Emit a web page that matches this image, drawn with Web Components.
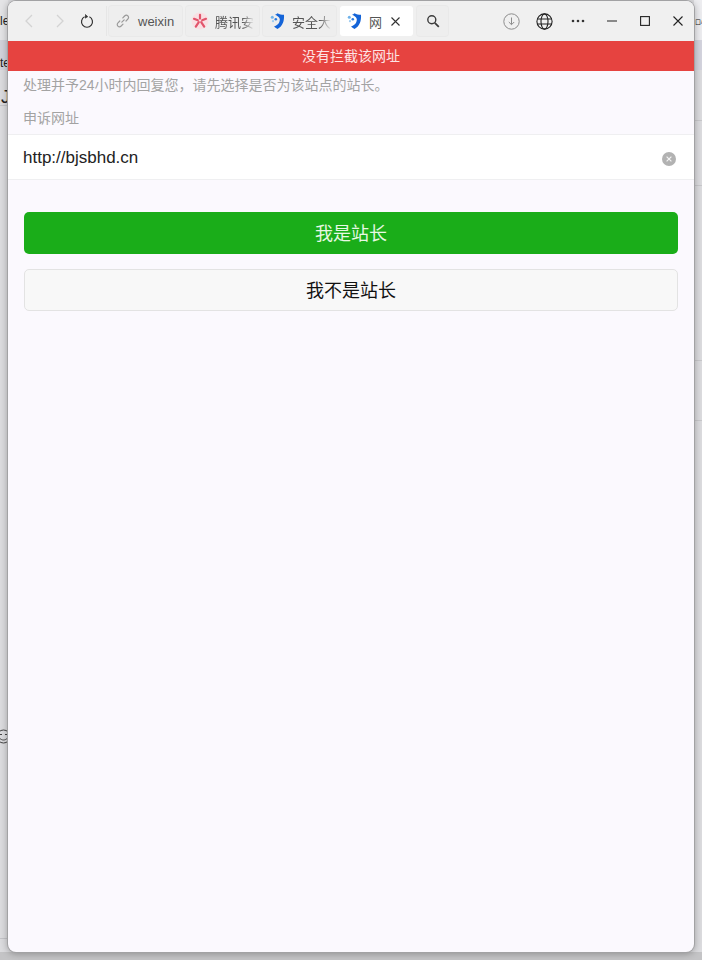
<!DOCTYPE html>
<html lang="zh">
<head>
<meta charset="utf-8">
<title>网址申诉</title>
<style>
html, body { margin: 0; height: 100%; }
body { width: 702px; height: 960px; overflow: hidden; position: relative; background: #dcdcdf; font-family: "Liberation Sans", "Noto Sans CJK SC", sans-serif; }
</style>
</head>
<body>
<desk-backdrop></desk-backdrop>
<browser-window>
	<nav-bar slot="bar">
		<browser-tab slot="tabs" icon="link">weixin</browser-tab>
		<browser-tab slot="tabs" icon="star" fade>腾讯安</browser-tab>
		<browser-tab slot="tabs" icon="shield" fade>安全大</browser-tab>
		<browser-tab slot="tabs" icon="shield" active>网</browser-tab>
	</nav-bar>
	<alert-banner slot="bar">没有拦截该网址</alert-banner>
	<appeal-form>
		<span slot="hint">处理并予24小时内回复您，请先选择是否为该站点的站长。</span>
		<span slot="label">申诉网址</span>
		<span slot="url">http://bjsbhd.cn</span>
		<action-button slot="actions" kind="primary">我是站长</action-button>
		<action-button slot="actions">我不是站长</action-button>
	</appeal-form>
</browser-window>

<script>
var sans = '"Liberation Sans", "Noto Sans CJK SC", sans-serif'
var tabIcons = {
	link: `<svg width="16" height="16" viewBox="0 0 16 16" fill="none" stroke="#9a9a9a" stroke-width="1.200" stroke-linecap="round"><path d="M6.800 9.200 9.200 6.800"/><path d="M7.800 4.800 9.600 3c1-1 2.400-1 3.300-.1s.9 2.300-.1 3.300L11 8"/><path d="M8 11.200 6.200 13c-1 1-2.400 1-3.300.1S2 10.800 3 9.800L4.800 8"/></svg>`,
	star: `<svg width="18" height="18" viewBox="0 0 18 18"><circle cx="9" cy="9" r="8.500" fill="#f9dfe3"/><g stroke="#e2556c" stroke-width="2.200" stroke-linecap="round"><path d="M9 2.800v3.800"/><path d="M3 6.800 6.800 8.300"/><path d="M15 6.800 11.200 8.300"/><path d="M7.800 10.200 4.800 14.600"/><path d="M10.200 10.200 13.200 14.600"/></g></svg>`,
	shield: `<svg width="18" height="18" viewBox="0 0 18 18"><path d="M9.500 1.200c2 1 4 1.500 6.500 1.500 .4 6-1.200 11.500-6.500 14.200-1.400-.7-2.600-1.500-3.500-2.500 3.800-1 6-3.800 5.800-7.400-.8-1.900-2.400-3.400-4.800-4.200 .9-.2 1.700-.7 2.500-1.600z" fill="#1464d8"/><circle cx="4.300" cy="5.300" r="1.500" fill="#6fb2ea"/><circle cx="7.800" cy="7.200" r="1.300" fill="#2b7be0"/><circle cx="5" cy="9.200" r="1.100" fill="#9ccbf0"/></svg>`
}

class DeskBackdrop extends HTMLElement {
	connectedCallback() {
		var shadow = this.attachShadow({mode: 'open'})
		// bits of the window behind, only the strips at the edges show
		shadow.innerHTML = `<style>
:host { position: absolute; inset: 0; display: block; overflow: hidden; font-family: ${sans}; color: #222; }
.top { position: absolute; left: 0; top: 0; width: 8px; height: 40px; background: #e4e4e6; }
.band { position: absolute; left: 0; top: 40px; width: 8px; height: 30px; background: #d2d2da; }
.rtop { position: absolute; right: 0; top: 0; width: 8px; height: 40px; background: #ededf0; }
.rband { position: absolute; right: 0; top: 40px; width: 8px; height: 30px; background: #d4d4de; }
.line { position: absolute; right: 0; width: 8px; height: 1px; background: #c9c9cc; }
.lline { position: absolute; left: 0; width: 8px; height: 1px; background: #c4c4c8; }
.t { position: absolute; white-space: nowrap; }
.bottom { position: absolute; left: 0; right: 0; bottom: 0; height: 8px; background: #c4c4c6; }
svg { position: absolute; left: -4px; top: 729px; }
</style>
<div class="top"></div><div class="band"></div><div class="rtop"></div><div class="rband"></div><div class="bottom"></div>
<div class="line" style="top:120px"></div><div class="line" style="top:185px"></div><div class="line" style="top:360px"></div><div class="line" style="top:420px"></div>
<div class="lline" style="top:105px"></div><div class="lline" style="top:938px"></div>
<span class="t" style="left:0;top:14px;font-size:12px">le</span>
<span class="t" style="left:0;top:56px;font-size:12px">te</span>
<span class="t" style="left:1px;top:87px;font-size:18px">Jy</span>
<span class="t" style="left:695px;top:17px;font-size:6px">口/</span>
<svg width="15" height="15" viewBox="0 0 15 15" fill="none" stroke="#444" stroke-width="1"><circle cx="7.500" cy="7.500" r="6.500"/><path d="M4 5.500h2M9 5.500h2M4 9.500c2 2 5 2 7 0"/></svg>`
	}
}
customElements.define('desk-backdrop', DeskBackdrop)

class BrowserWindow extends HTMLElement {
	connectedCallback() {
		var shadow = this.attachShadow({mode: 'open'})
		shadow.innerHTML = `<style>
:host { position: absolute; left: 8px; top: 1px; width: 686px; height: 951px; display: flex; flex-direction: column; background: #fbf9fe; border-radius: 8px; overflow: hidden; box-shadow: 0 0 0 1px #a2a2a4, 0 1px 7px 1px rgba(0,0,0,.28); }
</style>
<slot name="bar"></slot>
<slot></slot>`
	}
}
customElements.define('browser-window', BrowserWindow)

class NavBar extends HTMLElement {
	connectedCallback() {
		var shadow = this.attachShadow({mode: 'open'})
		shadow.innerHTML = `<style>
:host { display: flex; align-items: center; height: 40px; flex: none; background: #f0f0f0; box-sizing: border-box; padding: 0 0 0 5px; }
.btn { display: flex; align-items: center; justify-content: center; flex: none; height: 30px; }
.nav { display: flex; }
.tabs { display: flex; gap: 4px; margin-left: 7px; padding-left: 2px; border-left: 1px solid #e6e6e6; height: 30px; }
.search { width: 31px; height: 30px; margin-left: 4px; background: #eeeeee; border-radius: 3px; box-shadow: 0 0 0 1px #e9e9e9; }
.right { display: flex; margin-left: auto; }
</style>
<div class="nav">
	<div class="btn" style="width:32px"><svg width="12" height="16" viewBox="0 0 12 16" fill="none" stroke="#d3d3d3" stroke-width="1.300"><path d="M9 2 3 8l6 6"/></svg></div>
	<div class="btn" style="width:30px"><svg width="12" height="16" viewBox="0 0 12 16" fill="none" stroke="#d3d3d3" stroke-width="1.300"><path d="m3 2 6 6-6 6"/></svg></div>
	<div class="btn" style="width:24px"><svg width="14" height="15" viewBox="0 0 14 15" fill="none" stroke="#333" stroke-width="1.200"><path d="M4.600 2.800a5.500 5.500 0 1 0 4.800 0"/><path d="M5.200.300 7.800 2.700 5 4.300" fill="#333" stroke-width=".6"/></svg></div>
</div>
<div class="tabs"><slot name="tabs"></slot></div>
<div class="btn search"><svg width="14" height="14" viewBox="0 0 14 14" fill="none" stroke="#3c3c3c" stroke-width="1.400"><circle cx="5.800" cy="5.800" r="4"/><path d="m8.800 8.800 4 4" stroke-width="1.800"/></svg></div>
<div class="right">
	<div class="btn" style="width:33px"><svg width="17" height="17" viewBox="0 0 17 17" fill="none" stroke="#8c8c8c"><circle cx="8.500" cy="8.500" r="7.700"/><path d="M8.500 4.500v7M5.800 9l2.700 2.700L11.200 9"/></svg></div>
	<div class="btn" style="width:33px"><svg width="17" height="17" viewBox="0 0 17 17" fill="none" stroke="#222" stroke-width="1.100"><circle cx="8.500" cy="8.500" r="7.600"/><ellipse cx="8.500" cy="8.500" rx="3.500" ry="7.600"/><path d="M1 6h15M1 11h15"/></svg></div>
	<div class="btn" style="width:34px"><svg width="14" height="4" viewBox="0 0 14 4" fill="#333"><circle cx="2" cy="2" r="1.300"/><circle cx="7" cy="2" r="1.300"/><circle cx="12" cy="2" r="1.300"/></svg></div>
	<div class="btn" style="width:33px"><svg width="10" height="2" viewBox="0 0 10 2"><path d="M0 1h10" stroke="#222" stroke-width="1.100"/></svg></div>
	<div class="btn" style="width:33px"><svg width="10" height="10" viewBox="0 0 10 10" fill="none" stroke="#222" stroke-width="1.100"><rect x=".6" y=".6" width="8.800" height="8.800"/></svg></div>
	<div class="btn" style="width:33px"><svg width="10" height="10" viewBox="0 0 10 10" fill="none" stroke="#222" stroke-width="1.100"><path d="m.5.500 9 9M9.500.500l-9 9"/></svg></div>
</div>`
	}
}
customElements.define('nav-bar', NavBar)

class BrowserTab extends HTMLElement {
	connectedCallback() {
		var shadow = this.attachShadow({mode: 'open'})
		var active = this.hasAttribute('active')
		shadow.innerHTML = `<style>
:host { display: flex; align-items: center; width: 73px; height: 30px; box-sizing: border-box; padding-left: 5px; gap: 6px; background: #eeeeee; box-shadow: 0 0 0 1px #e9e9e9; border-radius: 3px; font-size: 13px; color: #555; overflow: hidden; flex: none; }
:host([active]) { background: #fff; box-shadow: none; }
.icon { display: flex; flex: none; width: 18px; justify-content: center; }
.name { white-space: nowrap; }
:host([fade]) .name { -webkit-mask-image: linear-gradient(to right, #000 70%, transparent); mask-image: linear-gradient(to right, #000 70%, transparent); }
.close { display: flex; margin-left: 3px; }
</style>
<span class="icon">${tabIcons[this.getAttribute('icon')]}</span>
<span class="name"><slot></slot></span>
${active ? `<span class="close"><svg width="9" height="9" viewBox="0 0 9 9" stroke="#333" stroke-width="1.100"><path d="m.5.500 8 8M8.500.500l-8 8"/></svg></span>` : ''}`
	}
}
customElements.define('browser-tab', BrowserTab)

class AlertBanner extends HTMLElement {
	connectedCallback() {
		var shadow = this.attachShadow({mode: 'open'})
		shadow.innerHTML = `<style>
:host { display: flex; align-items: center; justify-content: center; flex: none; height: 30px; box-sizing: border-box; padding-bottom: 2px; background: #e64340; color: #fde4e4; font-size: 14px; }
</style><slot></slot>`
	}
}
customElements.define('alert-banner', AlertBanner)

class AppealForm extends HTMLElement {
	connectedCallback() {
		var shadow = this.attachShadow({mode: 'open'})
		shadow.innerHTML = `<style>
:host { display: block; flex: 1; color: #a3a3a3; font-size: 14px; }
.hint { padding: 6px 15px 0; line-height: 16px; }
.label { padding: 17px 15px 0; line-height: 16px; }
.field { display: flex; align-items: center; justify-content: space-between; height: 46px; margin-top: 8px; padding: 2px 18px 0 15px; box-sizing: border-box; background: #fff; border-top: 1px solid #efeff1; border-bottom: 1px solid #efeff1; color: #222; font-size: 17px; }
.field svg { display: block; margin-top: 1px; }
.actions { display: flex; flex-direction: column; gap: 15px; padding: 32px 16px 0; }
</style>
<div class="hint"><slot name="hint"></slot></div>
<div class="label"><slot name="label"></slot></div>
<div class="field"><slot name="url"></slot>
	<svg width="14" height="14" viewBox="0 0 14 14"><circle cx="7" cy="7" r="7" fill="#b2b2b2"/><path d="m4.600 4.600 4.800 4.800m0-4.800-4.800 4.800" stroke="#f2f2f2" stroke-width="1.200"/></svg>
</div>
<div class="actions"><slot name="actions"></slot></div>`
	}
}
customElements.define('appeal-form', AppealForm)

class ActionButton extends HTMLElement {
	connectedCallback() {
		var shadow = this.attachShadow({mode: 'open'})
		shadow.innerHTML = `<style>
:host { display: flex; align-items: center; justify-content: center; height: 42px; box-sizing: border-box; padding-bottom: 3px; border-radius: 5px; background: #f8f8f8; border: 1px solid #e3e3e3; color: #111; font-size: 18px; }
:host([kind="primary"]) { background: #1aad19; border: 0; color: #e8f8e4; }
</style><slot></slot>`
	}
}
customElements.define('action-button', ActionButton)
</script>
</body>
</html>
